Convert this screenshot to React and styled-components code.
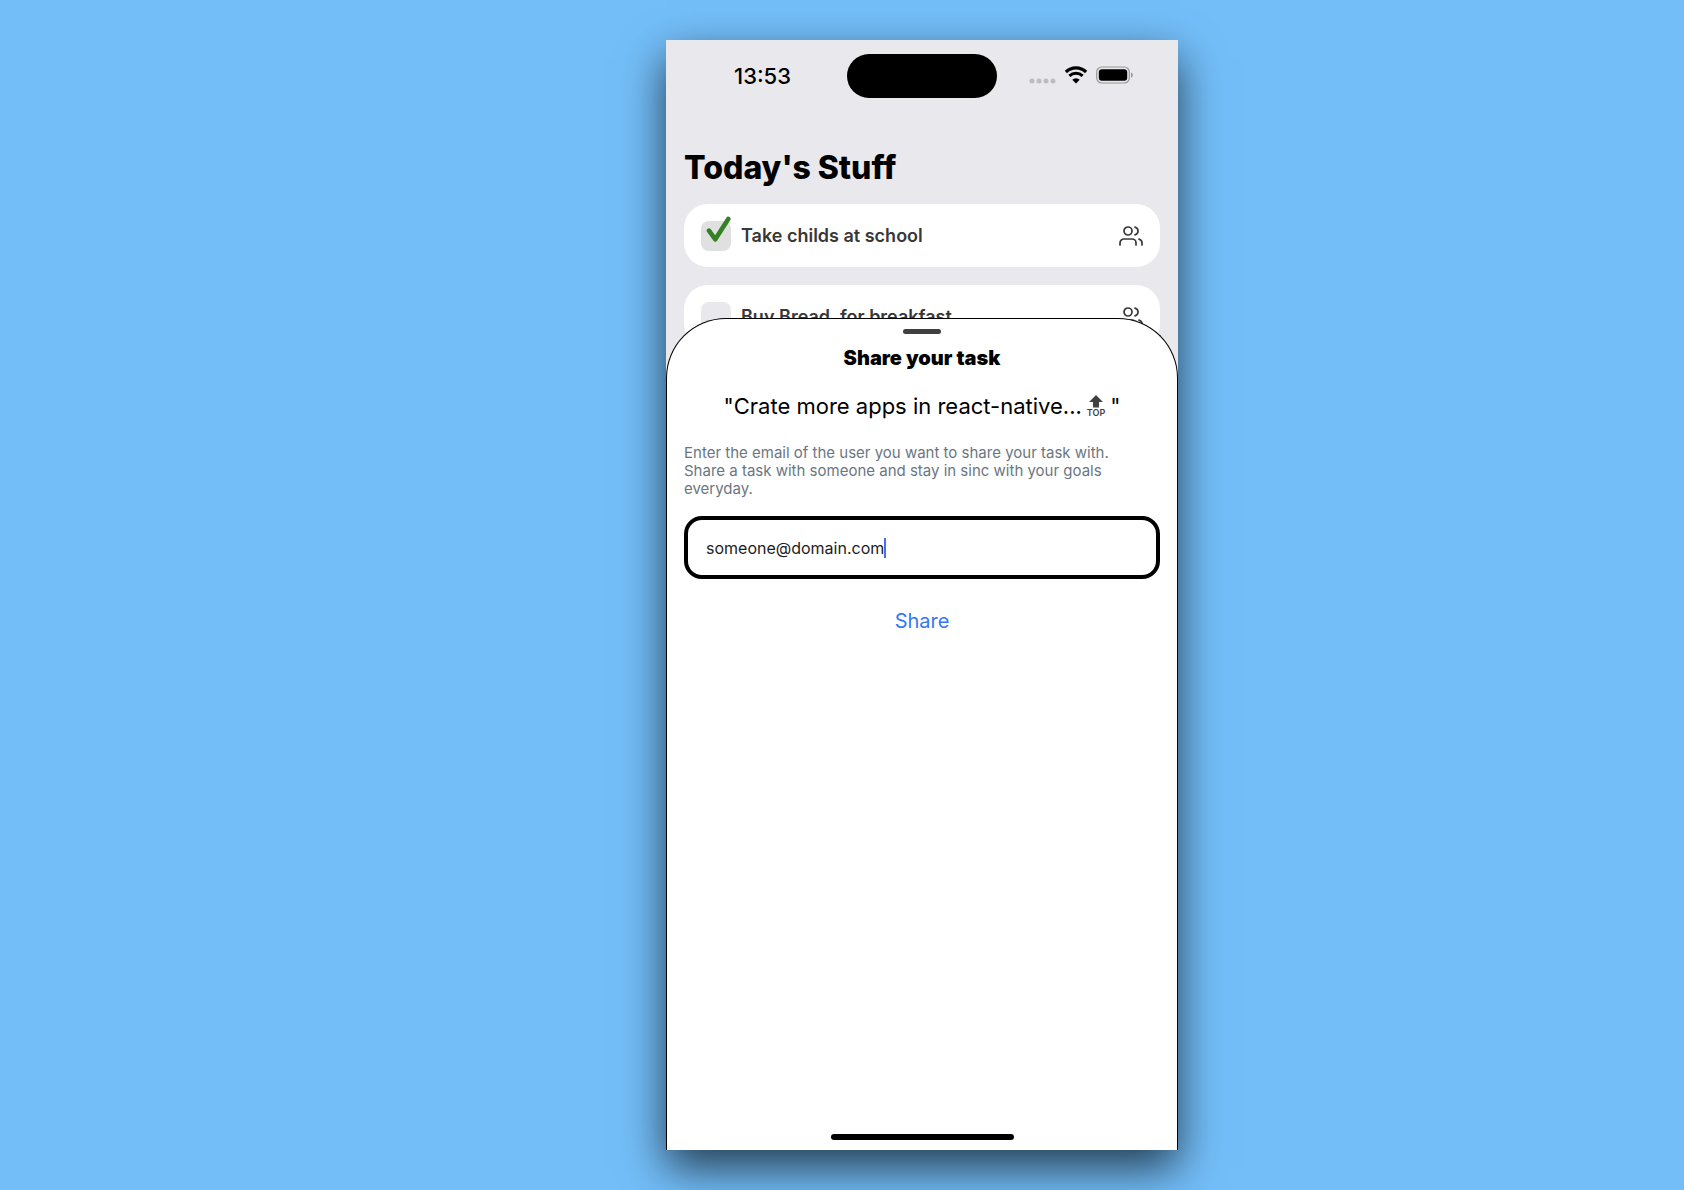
import React from "react";
import styled, { createGlobalStyle } from "styled-components";
import { FiUsers } from "react-icons/fi";

const GlobalStyle = createGlobalStyle`
  *, *::before, *::after { box-sizing: border-box; }
  body {
    margin: 0;
    background: #73bef9;
    color: #000;
    font-family: Inter, "Liberation Sans", sans-serif;
  }
  h1, h2, p, ul { margin: 0; padding: 0; }
  button, input { font: inherit; color: inherit; }
`;

const Stage = styled.main`
  display: flex;
  justify-content: center;
  min-height: 100vh;
  padding: 40px 0 40px 160px;
  overflow: hidden;
`;

const Phone = styled.div`
  position: relative;
  display: flex;
  flex-direction: column;
  width: 100%;
  max-width: 512px;
  background: #e9e8ed;
  box-shadow: 0 18px 42px rgba(0, 0, 0, 0.68);
`;

const StatusBar = styled.header`
  display: grid;
  grid-template-columns: 1fr 150px 1fr;
  align-items: center;
  padding: 14px 0 12px;
`;

const Clock = styled.time`
  justify-self: center;
  padding-left: 12px;
  font-size: 22px;
  line-height: 28px;
  font-weight: 500;
`;

const Island = styled.div`
  height: 44px;
  border-radius: 22px;
  background: #000;
`;

const Indicators = styled.div`
  display: flex;
  align-items: center;
  justify-content: flex-end;
  gap: 8px;
  padding: 0 44px 2px 0;
`;

const Screen = styled.section`
  display: flex;
  flex-direction: column;
  gap: 16px;
  padding: 38px 18px 0;
`;

const Title = styled.h1`
  font-size: 32px;
  line-height: 40px;
  font-weight: 800;
`;

const TaskList = styled.ul`
  display: flex;
  flex-direction: column;
  gap: 18px;
  list-style: none;
`;

const TaskCard = styled.li`
  display: flex;
  align-items: center;
  gap: 10px;
  height: 63px;
  padding: 0 17px;
  border-radius: 24px;
  background: #fff;
  color: #383838;
`;

const TaskLabel = styled.label`
  display: flex;
  flex: 1;
  align-items: center;
  gap: 10px;
  font-size: 18px;
  line-height: 24px;
  font-weight: 600;
`;

const TickBox = styled.span`
  position: relative;
  width: 30px;
  height: 30px;
`;

const Tick = styled.input`
  appearance: none;
  display: block;
  width: 30px;
  height: 30px;
  margin: 0;
  border-radius: 8px;
  background: #e9e8ed;
  &:checked { background: #e0e0e0; }
  & + svg { display: none; }
  &:checked + svg { display: block; }
`;

const TickMark = styled.svg`
  position: absolute;
  left: 5px;
  bottom: 8px;
  pointer-events: none;
`;

const IconButton = styled.button`
  display: flex;
  padding: 0;
  border: 0;
  background: none;
`;

const Sheet = styled.section`
  position: absolute;
  inset: 278px 0 0;
  display: flex;
  flex-direction: column;
  align-items: center;
  padding: 10px 17px;
  border: 1px solid #000;
  border-bottom: 0;
  border-radius: 60px 60px 0 0;
  background: #fff;
`;

const Handle = styled.div`
  width: 38px;
  height: 5px;
  border-radius: 3px;
  background: #404040;
`;

const SheetTitle = styled.h2`
  margin-top: 12px;
  font-size: 20px;
  line-height: 24px;
  font-weight: 900;
`;

const TaskName = styled.p`
  display: flex;
  align-items: center;
  gap: 5px;
  margin-top: 22px;
  font-size: 22px;
  line-height: 28px;
`;

const TopMark = styled.span`
  display: flex;
  flex-direction: column;
  align-items: center;
  color: #404040;
  font-size: 9px;
  line-height: 10px;
  font-weight: 600;
`;

const Hint = styled.p`
  align-self: stretch;
  margin-top: 24px;
  padding-right: 18px;
  color: #6b7682;
  font-size: 15px;
  line-height: 18px;
`;

const ShareForm = styled.form`
  display: flex;
  flex-direction: column;
  align-items: center;
  align-self: stretch;
  gap: 28px;
  margin-top: 18px;
`;

const EmailBox = styled.label`
  display: flex;
  align-items: center;
  align-self: stretch;
  height: 63px;
  padding: 0 18px;
  border: 4px solid #000;
  border-radius: 18px;
`;

const EmailInput = styled.input`
  field-sizing: content;
  max-width: 100%;
  padding: 0;
  border: 0;
  outline: 0;
  background: none;
  color: #1c1c1c;
  caret-color: transparent;
  font-size: 16px;
  line-height: 20px;
`;

const Caret = styled.span`
  width: 2px;
  height: 20px;
  background: #4a6cf0;
`;

const ShareButton = styled.button`
  padding: 0;
  border: 0;
  background: none;
  color: #3478f6;
  font-size: 20px;
  line-height: 28px;
`;

const HomeBar = styled.div`
  width: 183px;
  height: 6px;
  margin-top: auto;
  border-radius: 3px;
  background: #000;
`;

const tasks = [
  { id: "school", text: "Take childs at school", done: true },
  { id: "bread", text: "Buy Bread, for breakfast", done: false },
];

function SignalDots() {
  return (
    <svg width="27" height="18" viewBox="0 0 27 18" fill="#bdbcc1" aria-hidden="true">
      {[3, 10, 17, 24].map((x) => <circle key={x} cx={x} cy="15" r="2.5" />)}
    </svg>
  );
}

function Wifi() {
  return (
    <svg width="24" height="18" viewBox="0 0 24 18" fill="none" stroke="#000" aria-hidden="true">
      <path d="M1.9 6a14.6 14.6 0 0 1 20.2 0" strokeWidth="3.2" strokeLinejoin="round" />
      <path d="M5.4 9.9a9.6 9.6 0 0 1 13.2 0" strokeWidth="3.1" />
      <path d="M12 17.4 8.3 13.7a5.2 5.2 0 0 1 7.4 0z" fill="#000" stroke="none" />
    </svg>
  );
}

function Battery() {
  return (
    <svg width="38" height="18" viewBox="0 0 38 18" aria-hidden="true">
      <rect x="0.7" y="1" width="32.6" height="16" rx="5" fill="none" stroke="#98979b" strokeWidth="1.2" />
      <rect x="2.8" y="3.2" width="28.4" height="11.6" rx="3" />
      <path d="M35 6.4c2.4.8 2.4 4.4 0 5.2z" fill="#98979b" />
    </svg>
  );
}

function TaskRow({ id, text, done }) {
  return (
    <TaskCard>
      <TaskLabel htmlFor={id}>
        <TickBox>
          <Tick type="checkbox" id={id} defaultChecked={done} />
          <TickMark width="26" height="27" viewBox="0 0 26 27" fill="none" stroke="#348022" strokeWidth="4.6" strokeLinecap="round" strokeLinejoin="round">
            <path d="M3 14.7 9.3 23.3 22.3 3" />
          </TickMark>
        </TickBox>
        {text}
      </TaskLabel>
      <IconButton type="button" aria-label="Share task">
        <FiUsers size={24} strokeWidth={1.7} />
      </IconButton>
    </TaskCard>
  );
}

export default function App() {
  return (
    <>
      <GlobalStyle />
      <Stage>
        <Phone>
          <StatusBar>
            <Clock>13:53</Clock>
            <Island />
            <Indicators>
              <SignalDots />
              <Wifi />
              <Battery />
            </Indicators>
          </StatusBar>
          <Screen>
            <Title>Today's Stuff</Title>
            <TaskList>
              {tasks.map((task) => <TaskRow key={task.id} {...task} />)}
            </TaskList>
          </Screen>
          <Sheet>
            <Handle />
            <SheetTitle>Share your task</SheetTitle>
            <TaskName>
              "Crate more apps in react-native...
              <TopMark>
                <svg width="14" height="13" viewBox="0 0 14 13" fill="currentColor" aria-hidden="true">
                  <path d="M7 0 14 7H10V12.5H4V7H0z" />
                </svg>
                TOP
              </TopMark>
              "
            </TaskName>
            <Hint>
              Enter the email of the user you want to share your task with. Share a task with
              someone and stay in sinc with your goals everyday.
            </Hint>
            <ShareForm onSubmit={(event) => event.preventDefault()}>
              <EmailBox>
                <EmailInput type="email" aria-label="Email" defaultValue="someone@domain.com" />
                <Caret />
              </EmailBox>
              <ShareButton type="submit">Share</ShareButton>
            </ShareForm>
            <HomeBar />
          </Sheet>
        </Phone>
      </Stage>
    </>
  );
}
